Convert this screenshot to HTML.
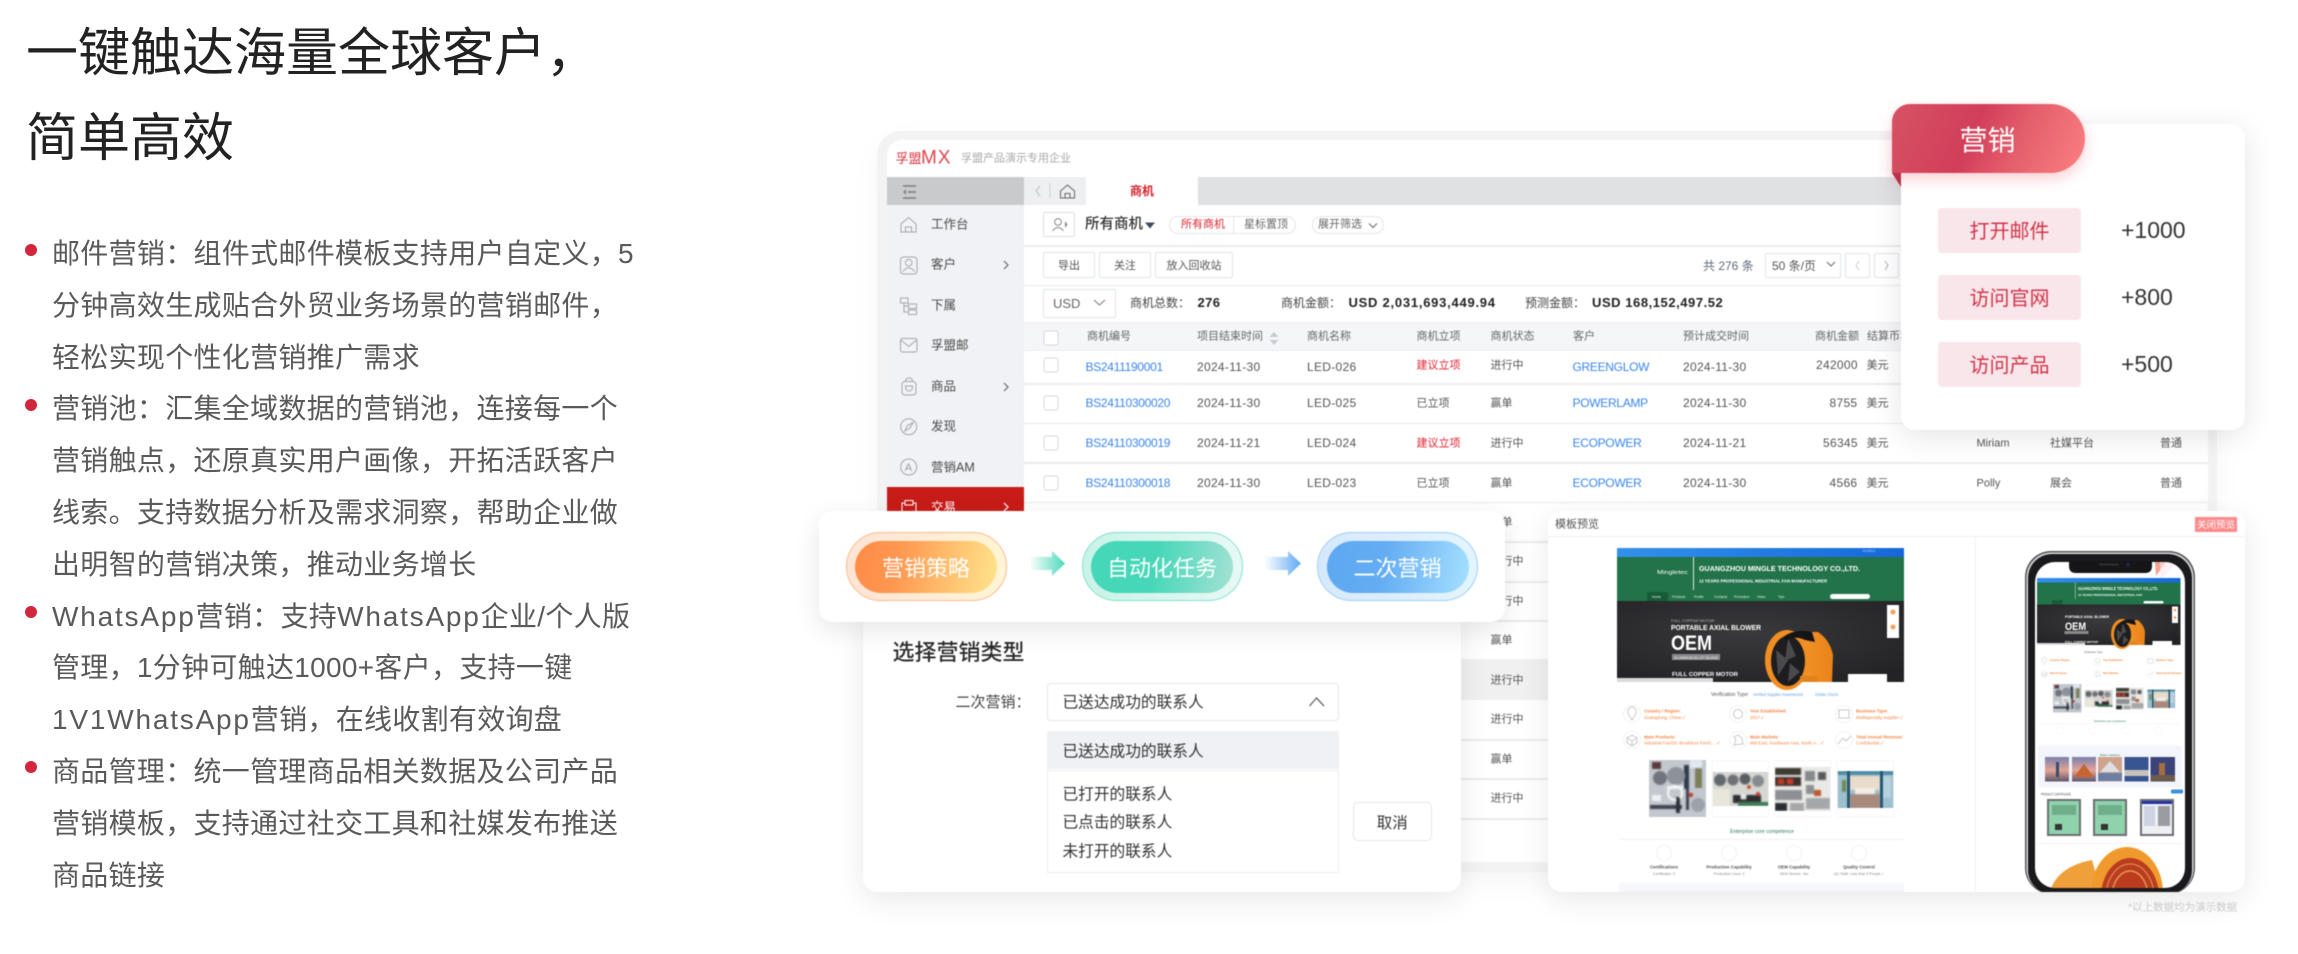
<!DOCTYPE html>
<html lang="zh"><head><meta charset="utf-8"><title>一键触达海量全球客户</title>
<style>
html,body{margin:0;padding:0;background:#fff}
body{position:relative;width:2298px;height:954px;overflow:hidden;font-family:"Liberation Sans","Noto Sans CJK SC",sans-serif;color:#333}
.t{position:absolute;white-space:nowrap;line-height:1.2;transform:translateY(-50%)}
.b{position:absolute;box-sizing:border-box}
.h1{font-size:52px;color:#222;left:26px}
.l{font-size:28px;color:#5a5a5a;left:52px;letter-spacing:.3px}
.w{letter-spacing:1.8px}
.dot{position:absolute;left:25px;width:12px;height:12px;border-radius:50%;background:#d2263c}
#mock{position:absolute;left:0;top:0;width:2298px;height:954px;filter:blur(.45px)}
.s{font-size:12.5px;color:#4a4a4a;left:931px}
.c{font-size:11px;color:#555;margin-top:1px}
.d{font-size:12px;letter-spacing:.3px;color:#555}
.bl{color:#3a86ee}.rd{color:#e1202e}
.btn{border:1px solid #dfe4ea;border-radius:2px;background:#fff;font-size:11px;color:#555;display:flex;align-items:center;justify-content:center}
.line{position:absolute;left:1024px;width:1184px;height:1.5px;background:#ebebec}
.card{position:absolute;background:#fff;box-shadow:0 8px 30px rgba(0,0,0,.09)}
.pill{position:absolute;top:532px;height:69px;width:161px;border-radius:35px;box-sizing:border-box;border:1.5px solid}
.in{position:absolute;top:541px;height:52px;width:142px;border-radius:26px;color:#fff;font-size:22px;display:flex;align-items:center;justify-content:center}
.mb{position:absolute;left:1938px;width:143px;height:45px;box-sizing:border-box;padding-bottom:3px;background:#f9e6ea;border-radius:4px;color:#d2334a;font-size:20px;display:flex;align-items:center;justify-content:center}
.mn{font-size:23px;color:#333;left:2121px}
svg{position:absolute;left:0;top:0}
</style></head><body>

<div class="t h1" style="top:54px">一键触达海量全球客户，</div>
<div class="t h1" style="top:139px">简单高效</div>

<i class="dot" style="top:244px"></i><i class="dot" style="top:399px"></i><i class="dot" style="top:606px"></i><i class="dot" style="top:761px"></i>
<div class="t l" style="top:253.5px">邮件营销：组件式邮件模板支持用户自定义，5</div>
<div class="t l" style="top:305.5px">分钟高效生成贴合外贸业务场景的营销邮件，</div>
<div class="t l" style="top:357.5px">轻松实现个性化营销推广需求</div>
<div class="t l" style="top:409px">营销池：汇集全域数据的营销池，连接每一个</div>
<div class="t l" style="top:461px">营销触点，还原真实用户画像，开拓活跃客户</div>
<div class="t l" style="top:512.5px">线索。支持数据分析及需求洞察，帮助企业做</div>
<div class="t l" style="top:564.5px">出明智的营销决策，推动业务增长</div>
<div class="t l" style="top:616.5px"><span class="w">WhatsApp</span>营销：支持<span class="w">WhatsApp</span>企业/个人版</div>
<div class="t l" style="top:668px">管理，1分钟可触达1000+客户，支持一键</div>
<div class="t l" style="top:719.5px"><span class="w">1V1WhatsApp</span>营销，在线收割有效询盘</div>
<div class="t l" style="top:771.5px">商品管理：统一管理商品相关数据及公司产品</div>
<div class="t l" style="top:823.5px">营销模板，支持通过社交工具和社媒发布推送</div>
<div class="t l" style="top:875.5px">商品链接</div>

<div id="mock">
<!-- main panel -->
<div class="b" style="left:877px;top:131px;width:1340px;height:741px;background:#fff;border:solid #f3f3f4;border-width:9px 9px 10px 10px;border-radius:24px;box-shadow:0 10px 30px rgba(0,0,0,.04)"></div>
<div class="b" style="left:887px;top:177px;width:137px;height:28px;background:#c9cacc"></div>
<div class="b" style="left:1024px;top:177px;width:1184px;height:28px;background:#e0e1e3"></div>
<div class="b" style="left:1024px;top:177px;width:62px;height:28px;background:#eeeff1"></div>
<div class="b" style="left:1086px;top:177px;width:112px;height:28px;background:#fff"></div>
<div class="b" style="left:887px;top:205px;width:137px;height:667px;background:#f1f2f5"></div>
<div class="b" style="left:887px;top:487px;width:137px;height:40px;background:#c71c18"></div>

<div class="t" style="left:895.5px;top:159px;font-size:13px;color:#d9303c">孚盟</div>
<div class="t" style="left:921px;top:159px;font-size:19px;color:#dc4650;letter-spacing:1px;font-weight:400">MX</div>
<div class="t" style="left:961px;top:159px;font-size:11px;color:#a8a8a8">孚盟产品演示专用企业</div>
<div class="t" style="left:1130px;top:191px;font-size:12px;color:#d7212c;font-weight:700">商机</div>

<div class="t s" style="top:225px">工作台</div>
<div class="t s" style="top:265px">客户</div>
<div class="t s" style="top:305.7px">下属</div>
<div class="t s" style="top:345.7px">孚盟邮</div>
<div class="t s" style="top:386.7px">商品</div>
<div class="t s" style="top:426.7px">发现</div>
<div class="t s" style="top:467.5px">营销AM</div>
<div class="t s" style="top:507.5px;color:#fff">交易</div>

<div class="b" style="left:1043px;top:212px;width:32px;height:25px;border:1px solid #dcdfe4;border-radius:2px"></div>
<div class="t" style="left:1085px;top:225px;font-size:14.5px;color:#333;font-weight:500">所有商机</div>
<div class="b" style="left:1169px;top:216px;width:127px;height:18px;border:1px solid #e4e6ea;border-radius:9px"></div>
<div class="b" style="left:1233px;top:216px;width:1px;height:18px;background:#e4e6ea"></div>
<div class="t" style="left:1181px;top:225px;font-size:11px;color:#dc2530">所有商机</div>
<div class="t" style="left:1244px;top:225px;font-size:11px;color:#666">星标置顶</div>
<div class="b" style="left:1312px;top:216px;width:72px;height:18px;border:1px solid #e4e6ea;border-radius:9px"></div>
<div class="t" style="left:1318px;top:225px;font-size:11px;color:#666">展开筛选</div>
<div class="line" style="top:245px"></div>

<div class="b btn" style="left:1043px;top:252px;width:52px;height:26px">导出</div>
<div class="b btn" style="left:1099px;top:252px;width:52px;height:26px">关注</div>
<div class="b btn" style="left:1155px;top:252px;width:78px;height:26px">放入回收站</div>
<div class="t" style="left:1703px;top:265.5px;font-size:12px;color:#5e6a78">共 276 条</div>
<div class="b btn" style="left:1765px;top:253px;width:76px;height:25px;justify-content:flex-start;padding-left:6px;font-size:12px">50 条/页</div>
<div class="b btn" style="left:1845px;top:253px;width:25px;height:25px"></div>
<div class="b btn" style="left:1874px;top:253px;width:25px;height:25px"></div>
<div class="line" style="top:284.5px"></div>

<div class="b btn" style="left:1043px;top:289px;width:73px;height:29px;justify-content:flex-start;padding-left:9px;font-size:13px;color:#666">USD</div>
<div class="t" style="left:1130px;top:303px;font-size:12px;color:#444">商机总数：</div>
<div class="t" style="left:1197.5px;top:303px;font-size:13px;font-weight:700;color:#222;letter-spacing:.4px">276</div>
<div class="t" style="left:1281px;top:303px;font-size:12px;color:#444">商机金额：</div>
<div class="t" style="left:1348.5px;top:303px;font-size:13px;font-weight:700;color:#222;letter-spacing:.75px">USD 2,031,693,449.94</div>
<div class="t" style="left:1525px;top:303px;font-size:12px;color:#444">预测金额：</div>
<div class="t" style="left:1592px;top:303px;font-size:13px;font-weight:700;color:#222;letter-spacing:.55px">USD 168,152,497.52</div>

<div class="b" style="left:1024px;top:322px;width:1184px;height:29px;background:#f5f6f8;border-top:1px solid #eee;border-bottom:1px solid #eee"></div>
<div class="t c" style="left:1087px;top:336px;color:#666">商机编号</div>
<div class="t c" style="left:1197px;top:336px;color:#666">项目结束时间</div>
<div class="t c" style="left:1307px;top:336px;color:#666">商机名称</div>
<div class="t c" style="left:1416.5px;top:336px;color:#666">商机立项</div>
<div class="t c" style="left:1490.5px;top:336px;color:#666">商机状态</div>
<div class="t c" style="left:1573px;top:336px;color:#666">客户</div>
<div class="t c" style="left:1683px;top:336px;color:#666">预计成交时间</div>
<div class="t c" style="left:1815px;top:336px;color:#666">商机金额</div>
<div class="t c" style="left:1867px;top:336px;color:#666">结算币种</div>

<div class="line" style="top:383px"></div><div class="line" style="top:422.5px"></div><div class="line" style="top:462px"></div><div class="line" style="top:501.5px"></div>
<div class="line" style="top:541px"></div><div class="line" style="top:581px"></div><div class="line" style="top:620px"></div>
<div class="b" style="left:1024px;top:659px;width:1184px;height:41px;background:#f0f0f1"></div>
<div class="line" style="top:739px"></div><div class="line" style="top:778px"></div><div class="line" style="top:818px"></div>

<!-- row 1 -->
<div class="t d bl" style="left:1085.5px;top:366.5px;letter-spacing:-.3px">BS2411190001</div>
<div class="t d" style="left:1197px;top:366.5px">2024-11-30</div>
<div class="t d" style="left:1307px;top:366.5px">LED-026</div>
<div class="t c rd" style="left:1416.5px;top:364.5px">建议立项</div>
<div class="t c" style="left:1490.5px;top:364.5px">进行中</div>
<div class="t d bl" style="left:1572.5px;top:366.5px;letter-spacing:-.3px">GREENGLOW</div>
<div class="t d" style="left:1683px;top:366.5px">2024-11-30</div>
<div class="t d" style="left:1816px;top:364.5px">242000</div>
<div class="t c" style="left:1866.5px;top:364.5px">美元</div>
<!-- row 2 -->
<div class="t d bl" style="left:1085.5px;top:403px;letter-spacing:-.3px">BS24110300020</div>
<div class="t d" style="left:1197px;top:403px">2024-11-30</div>
<div class="t d" style="left:1307px;top:403px">LED-025</div>
<div class="t c" style="left:1416.5px;top:403px">已立项</div>
<div class="t c" style="left:1490.5px;top:403px">赢单</div>
<div class="t d bl" style="left:1572.5px;top:403px;letter-spacing:-.3px">POWERLAMP</div>
<div class="t d" style="left:1683px;top:403px">2024-11-30</div>
<div class="t d" style="left:1829.5px;top:403px">8755</div>
<div class="t c" style="left:1866.5px;top:403px">美元</div>
<!-- row 3 -->
<div class="t d bl" style="left:1085.5px;top:443px;letter-spacing:-.3px">BS24110300019</div>
<div class="t d" style="left:1197px;top:443px">2024-11-21</div>
<div class="t d" style="left:1307px;top:443px">LED-024</div>
<div class="t c rd" style="left:1416.5px;top:443px">建议立项</div>
<div class="t c" style="left:1490.5px;top:443px">进行中</div>
<div class="t d bl" style="left:1572.5px;top:443px;letter-spacing:-.3px">ECOPOWER</div>
<div class="t d" style="left:1683px;top:443px">2024-11-21</div>
<div class="t d" style="left:1823px;top:443px">56345</div>
<div class="t c" style="left:1866.5px;top:443px">美元</div>
<div class="t c" style="left:1976.5px;top:443px">Miriam</div>
<div class="t c" style="left:2050px;top:443px">社媒平台</div>
<div class="t c" style="left:2160px;top:443px">普通</div>
<!-- row 4 -->
<div class="t d bl" style="left:1085.5px;top:482.5px;letter-spacing:-.3px">BS24110300018</div>
<div class="t d" style="left:1197px;top:482.5px">2024-11-30</div>
<div class="t d" style="left:1307px;top:482.5px">LED-023</div>
<div class="t c" style="left:1416.5px;top:482.5px">已立项</div>
<div class="t c" style="left:1490.5px;top:482.5px">赢单</div>
<div class="t d bl" style="left:1572.5px;top:482.5px;letter-spacing:-.3px">ECOPOWER</div>
<div class="t d" style="left:1683px;top:482.5px">2024-11-30</div>
<div class="t d" style="left:1829.5px;top:482.5px">4566</div>
<div class="t c" style="left:1866.5px;top:482.5px">美元</div>
<div class="t c" style="left:1976.5px;top:482.5px">Polly</div>
<div class="t c" style="left:2050px;top:482.5px">展会</div>
<div class="t c" style="left:2160px;top:482.5px">普通</div>
<!-- status col -->
<div class="t c" style="left:1490.5px;top:522px">赢单</div>
<div class="t c" style="left:1490.5px;top:561px">进行中</div>
<div class="t c" style="left:1490.5px;top:600.5px">进行中</div>
<div class="t c" style="left:1490.5px;top:640px">赢单</div>
<div class="t c" style="left:1490.5px;top:680px">进行中</div>
<div class="t c" style="left:1490.5px;top:719px">进行中</div>
<div class="t c" style="left:1490.5px;top:759px">赢单</div>
<div class="t c" style="left:1490.5px;top:798px">进行中</div>

<!-- panel icons -->
<svg width="2298" height="954" viewBox="0 0 2298 954" fill="none" stroke="#a3a6ab" stroke-width="1" style="z-index:1">
<path d="M903 186H916M908 192H916M903 198H916" stroke="#7d7f82" stroke-width="1.4"/><path d="M906 189.5L903 192L906 194.5Z" fill="#7d7f82" stroke="none"/>
<path d="M901 224L908.5 217.5L916 224V232H901ZM905.5 232V227H911.5V232"/>
<rect x="900.5" y="257" width="16.5" height="17" rx="3"/><circle cx="908.7" cy="262.7" r="3.3"/><path d="M903 271.5Q908.7 264 914.5 271.5"/>
<rect x="900.5" y="298" width="7.5" height="5"/><rect x="908.5" y="304" width="8" height="4.5"/><rect x="908.5" y="310" width="8" height="4.5"/><path d="M904 303V312H908.5M904 306H908.5"/>
<rect x="900.5" y="338.5" width="16.5" height="13.5" rx="2"/><path d="M901 340L908.7 346.5L916.5 340"/>
<rect x="902" y="381.5" width="14" height="13.5" rx="3"/><path d="M905.5 381.5Q905.5 378 909 378Q912.5 378 912.5 381.5"/><path d="M905.5 386H912.5Q912.5 391 909 391Q905.5 391 905.5 386Z"/>
<circle cx="908.7" cy="426.7" r="8"/><path d="M913 422.5L910 428L904.8 431L907.5 425.5Z"/>
<circle cx="908.7" cy="467" r="8"/><text x="904.7" y="471" font-size="11" fill="#999" stroke="none" font-family="Liberation Sans">A</text>
<path d="M905 503H902V513H916V503H913M905 500.5H913V505H905Z" stroke="#fff"/>
<path d="M1004 261L1008 265L1004 269M1004 383L1008 387L1004 391" stroke="#666" stroke-width="1.2"/>
<path d="M1004 503L1008 507L1004 511" stroke="#fff" stroke-width="1.2"/>
<path d="M1040 186L1036 191L1040 196" stroke="#bbb"/><path d="M1050 183V198" stroke="#d4d4d6"/>
<path d="M1060.5 191L1067.5 185L1074.5 191V198H1060.5ZM1065 198V193.5H1070V198" stroke="#666"/>
<circle cx="1058" cy="222" r="3.4" stroke="#888"/><path d="M1052.5 231Q1058 224 1063.5 231" stroke="#888"/><path d="M1065 221L1067.5 224.5L1065 228Z" fill="#888" stroke="none"/>
<path d="M1145 222.5H1155L1150 228.5Z" fill="#3f4d63" stroke="none"/>
<path d="M1369 223.5L1373 227.5L1377 223.5" stroke="#666"/>
<path d="M1094 300L1099.5 305L1105 300" stroke="#777"/>
<path d="M1827 262L1831 266L1835 262" stroke="#667"/>
<path d="M1859 261L1856 265.5L1859 270" stroke="#ccd"/><path d="M1885 261L1888 265.5L1885 270" stroke="#aab"/>
<path d="M1274 332L1278.5 337H1269.5ZM1274 345L1278.5 340H1269.5Z" fill="#c8ccd2" stroke="none"/>
<g stroke="#d5d8dc" fill="#fff"><rect x="1044" y="331" width="14" height="14" rx="2"/><rect x="1044" y="358" width="14" height="14" rx="2"/><rect x="1044" y="396" width="14" height="14" rx="2"/><rect x="1044" y="436" width="14" height="14" rx="2"/><rect x="1044" y="476" width="14" height="14" rx="2"/></g>
</svg>

<!-- template card -->
<div class="card" style="left:1547.5px;top:511px;width:697.5px;height:381px;border-radius:14px;z-index:2"></div>
<div class="b" style="left:1547.5px;top:536px;width:697.5px;height:1px;background:#efefef;z-index:2"></div>
<div class="b" style="left:1975px;top:536px;width:1px;height:356px;background:#efefef;z-index:2"></div>
<div class="t" style="left:1555px;top:524.5px;font-size:11px;color:#555;z-index:2">模板预览</div>
<div class="b" style="left:2195px;top:516.5px;width:42px;height:15px;background:#fb8a8a;color:#fff;font-size:9.5px;display:flex;align-items:center;justify-content:center;z-index:2">关闭预览</div>

<svg width="2298" height="954" viewBox="0 0 2298 954" style="z-index:2" font-family="Liberation Sans, Noto Sans CJK SC, sans-serif">
<defs>
<linearGradient id="bb" x1="0" x2="1"><stop offset="0" stop-color="#3391ec"/><stop offset="1" stop-color="#1668d8"/></linearGradient>
<radialGradient id="dk" cx=".45" cy=".4" r=".7"><stop offset="0" stop-color="#3a3a3c"/><stop offset="1" stop-color="#232325"/></radialGradient>
<linearGradient id="sun" x1="0" y1="0" x2="0" y2="1"><stop offset="0" stop-color="#7b7fae"/><stop offset=".55" stop-color="#e3a596"/><stop offset="1" stop-color="#5c566d"/></linearGradient>
<linearGradient id="drum" x1="0" x2="1"><stop offset="0" stop-color="#f59a2e"/><stop offset="1" stop-color="#e9831a"/></linearGradient>
<filter id="soft" x="-5%" y="-5%" width="110%" height="110%"><feGaussianBlur stdDeviation=".9"/></filter>
<clipPath id="cardclip"><rect x="1547" y="511" width="698" height="381"/></clipPath>
<clipPath id="scr"><rect x="2035" y="562" width="150" height="326" rx="20"/></clipPath>
<clipPath id="ph1"><rect x="1649" y="760" width="57" height="57"/></clipPath>
<clipPath id="ph2"><rect x="1712" y="772" width="57" height="34"/></clipPath>
<clipPath id="ph3"><rect x="1774" y="767" width="57" height="44"/></clipPath>
<clipPath id="ph4"><rect x="1837" y="771" width="57" height="37"/></clipPath>
<g id="site">
<rect x="1617" y="548" width="287" height="9" fill="url(#bb)"/>
<rect x="1617" y="557" width="287" height="44" fill="#22734a"/>
<rect x="1693" y="557" width="1" height="33" fill="#d8e8df"/>
<rect x="1647" y="592" width="21" height="9" fill="#175c38"/>
<rect x="1830" y="594" width="40" height="5" rx="2.5" fill="#fff"/>
<rect x="1617" y="601" width="287" height="81" fill="url(#dk)"/>
<rect x="1672" y="654" width="48" height="6" fill="#8a8a8c"/>
<path d="M1785 632 L1818 632 Q1830 640 1833 655 L1832 682 L1785 682Z" fill="url(#drum)"/>
<ellipse cx="1787" cy="660" rx="22" ry="30" fill="#f08e22"/>
<ellipse cx="1788" cy="661" rx="17" ry="25" fill="#1d1d1f"/>
<path d="M1788 638L1796 656L1785 661ZM1776 650L1788 660L1778 676ZM1790 663L1800 672L1788 682Z" fill="#4a4a4c"/>
<path d="M1783 637Q1796 628 1812 632L1815 642L1805 640Q1795 635 1786 641Z" fill="#151517"/>
<rect x="1800" y="676" width="18" height="6" fill="#e2821c"/>
<rect x="1887" y="605" width="12" height="33" fill="#fff"/><circle cx="1893" cy="612" r="2.5" fill="#f5a05e"/><circle cx="1893" cy="627" r="2.5" fill="#f5a05e"/>
<rect x="1848" y="674" width="39" height="8" fill="#fff"/>
<rect x="1617" y="678" width="96" height="4" fill="#d9dadd"/>
<g fill="#fff" stroke="#eee" stroke-width=".8"><circle cx="1632" cy="714" r="8.5"/><circle cx="1738" cy="714" r="8.5"/><circle cx="1844" cy="714" r="8.5"/><circle cx="1632" cy="740" r="8.5"/><circle cx="1738" cy="740" r="8.5"/><circle cx="1844" cy="740" r="8.5"/></g>
<g fill="none" stroke="#c2c4c8" stroke-width=".9"><path d="M1632 720Q1627 713 1628 711A4 4 0 1 1 1636 711Q1637 713 1632 720Z"/><circle cx="1738" cy="714" r="4.5"/><rect x="1839" y="710" width="10" height="8"/><path d="M1632 735L1637 738V743L1632 746L1627 743V738ZM1627 738L1632 741L1637 738M1632 741V746"/><path d="M1734 745L1736 740L1734 737L1738 735L1742 738L1743 744Z"/><path d="M1838 744L1843 738L1846 741L1851 736"/></g>
<!-- photos -->
<g clip-path="url(#ph1)"><rect x="1649" y="760" width="57" height="57" fill="#c3c8ce"/>
<g filter="url(#soft)"><rect x="1652" y="762" width="9" height="7" fill="#5a3a3c"/><rect x="1690" y="760" width="12" height="8" fill="#dfe9f0"/><rect x="1684" y="765" width="5" height="24" fill="#2f3a4c"/><rect x="1695" y="768" width="7" height="20" fill="#7a7f58"/><circle cx="1676" cy="776" r="9" fill="#8d929a"/><circle cx="1660" cy="778" r="7" fill="#6f747d"/><rect x="1667" y="786" width="16" height="3" fill="#f3f5f7"/><circle cx="1675" cy="793" r="7" fill="none" stroke="#f2f4f6" stroke-width="2.4"/><rect x="1652" y="795" width="9" height="6" fill="#eef0f2"/><rect x="1650" y="805" width="32" height="4" fill="#3e4350"/><rect x="1676" y="797" width="4" height="16" fill="#2b2f3a"/><rect x="1686" y="788" width="3" height="22" fill="#3a3f4c"/><circle cx="1691" cy="795" r="2.2" fill="#c93a28"/><circle cx="1698" cy="805" r="7" fill="#9da1a8"/></g></g>
<g clip-path="url(#ph2)"><rect x="1712" y="772" width="57" height="34" fill="#d6d6d2"/>
<g filter="url(#soft)"><circle cx="1720" cy="780" r="6" fill="#64686d"/><circle cx="1733" cy="780" r="5.5" fill="#6e7276"/><circle cx="1745" cy="779" r="5.5" fill="#5a5e64"/><circle cx="1758" cy="781" r="6" fill="#888b8f"/><rect x="1712" y="789" width="18" height="17" fill="#e9e7dc"/><rect x="1733" y="795" width="28" height="8" fill="#2d2f30"/><rect x="1738" y="802" width="31" height="4" fill="#3f7c55"/><circle cx="1749" cy="787" r="2" fill="#c95028"/><circle cx="1758" cy="794" r="2" fill="#c23a26"/><rect x="1741" y="794" width="5" height="5" fill="#e8e8e6"/></g></g>
<g clip-path="url(#ph3)"><rect x="1774" y="767" width="57" height="44" fill="#e9e9e6"/>
<g filter="url(#soft)"><rect x="1775" y="768" width="26" height="7" fill="#3d3a33"/><rect x="1775" y="777" width="26" height="9" fill="#3c2e2c"/><rect x="1778" y="779" width="6" height="5" fill="#bb3a28"/><rect x="1787" y="779" width="6" height="5" fill="#c23d2c"/><rect x="1775" y="790" width="27" height="10" fill="#8d8f94"/><rect x="1775" y="803" width="12" height="8" fill="#2c2d30"/><rect x="1790" y="803" width="14" height="8" fill="#a6a7a8"/><rect x="1805" y="771" width="10" height="10" fill="#87898d"/><rect x="1818" y="772" width="8" height="8" fill="#585a5e"/><rect x="1806" y="785" width="8" height="9" fill="#8d8f92"/><rect x="1814" y="790" width="7" height="6" fill="#bb5a2c"/><rect x="1806" y="798" width="24" height="11" fill="#a5a7aa"/></g></g>
<g clip-path="url(#ph4)"><rect x="1837" y="771" width="57" height="37" fill="#9dbfd2"/>
<g filter="url(#soft)"><rect x="1837" y="771" width="57" height="4" fill="#4e8ba3"/><rect x="1850" y="776" width="30" height="14" fill="#e9dccb"/><rect x="1855" y="788" width="20" height="6" fill="#f2eee8"/><rect x="1850" y="794" width="30" height="14" fill="#a88a7c"/><rect x="1842" y="780" width="4" height="12" fill="#6a8a4c"/><rect x="1883" y="776" width="8" height="22" fill="#b7d1dd"/></g>
<rect x="1847" y="771" width="3" height="37" fill="#275a70"/><rect x="1880" y="771" width="3" height="37" fill="#275a70"/></g>
<rect x="1712.5" y="760.5" width="56" height="56" fill="none" stroke="#f4f5f6" stroke-width=".8"/><rect x="1774.5" y="760.5" width="56" height="56" fill="none" stroke="#f4f5f6" stroke-width=".8"/><rect x="1837.5" y="760.5" width="56" height="56" fill="none" stroke="#f4f5f6" stroke-width=".8"/>
<rect x="1619" y="839" width="285" height=".8" fill="#eee"/>
<g fill="#fff" stroke="#eee" stroke-width=".8"><circle cx="1664" cy="853" r="7.5"/><circle cx="1729" cy="853" r="7.5"/><circle cx="1794" cy="853" r="7.5"/><circle cx="1859" cy="853" r="7.5"/></g>
<rect x="1619" y="883" width="285" height="9" fill="#f5f7fb"/>
</g>
</defs>

<g clip-path="url(#cardclip)" style="filter:blur(.3px)">
<use href="#site"/>
<g fill="#fff">
<text x="1699" y="571" font-size="7.5" font-weight="700" textLength="161" lengthAdjust="spacingAndGlyphs">GUANGZHOU MINGLE TECHNOLOGY CO.,LTD.</text>
<text x="1699" y="582.5" font-size="4.5" font-weight="700" textLength="128" lengthAdjust="spacingAndGlyphs">12 YEARS PROFESSIONAL INDUSTRIAL FAN MANUFACTURER</text>
<text x="1657" y="574" font-size="5" textLength="31" lengthAdjust="spacingAndGlyphs">Mingletec</text>
<text x="1671" y="622" font-size="4" fill="#bbb">FULL COPPER MOTOR</text>
<text x="1671" y="630" font-size="7" font-weight="700" textLength="90" lengthAdjust="spacingAndGlyphs">PORTABLE AXIAL BLOWER</text>
<text x="1671" y="650" font-size="21" font-weight="700" textLength="41" lengthAdjust="spacingAndGlyphs">OEM</text>
<text x="1674" y="659" font-size="4" fill="#eee" textLength="44" lengthAdjust="spacingAndGlyphs">ALUMINUM ALLOY BLADE</text>
<text x="1672" y="676" font-size="5.5" font-weight="700" textLength="66" lengthAdjust="spacingAndGlyphs">FULL COPPER MOTOR</text>
</g>
<g font-size="3.4" fill="#dfeee6"><text x="1652" y="598">Home</text><text x="1672" y="598">Products</text><text x="1694" y="598">Profile</text><text x="1714" y="598">Contacts</text><text x="1734" y="598">Promotion</text><text x="1757" y="598">Video</text><text x="1778" y="598">Tips</text></g>
<text x="1862" y="552" font-size="4" fill="#9cc8f5">Verified</text>
<text x="1711" y="696" font-size="5.2" fill="#555" textLength="38" lengthAdjust="spacingAndGlyphs">Verification Type:</text>
<text x="1753" y="696" font-size="4.6" fill="#5f9fe8" textLength="50" lengthAdjust="spacingAndGlyphs">Verified Supplier Assessment</text>
<text x="1815" y="696" font-size="4.6" fill="#5f9fe8" textLength="23" lengthAdjust="spacingAndGlyphs">Onsite Check</text>
<g font-size="4.4" fill="#f5843e">
<text x="1644" y="712.5" font-weight="700">Country / Region:</text><text x="1644" y="718.8">Guangdong, China ✓</text>
<text x="1750" y="712.5" font-weight="700">Year Established:</text><text x="1750" y="718.8">2017 ✓</text>
<text x="1856" y="712.5" font-weight="700">Business Type:</text><text x="1856" y="718.8">Multispecialty supplier ✓</text>
<text x="1644" y="738.5" font-weight="700">Main Products:</text><text x="1644" y="744.5">Industrial Fan/DC Brushless Fan/C... ✓</text>
<text x="1750" y="738.5" font-weight="700">Main Markets:</text><text x="1750" y="744.5">Mid East, Southeast Asia, North A... ✓</text>
<text x="1856" y="738.5" font-weight="700">Total Annual Revenue:</text><text x="1856" y="744.5">Confidential ✓</text>
</g>
<text x="1730" y="833" font-size="5.4" fill="#2f7a5b" textLength="64" lengthAdjust="spacingAndGlyphs">Enterprise core competence</text>
<g font-size="4.4" fill="#555" font-weight="700" text-anchor="middle"><text x="1664" y="868.5">Certifications</text><text x="1729" y="868.5">Production Capability</text><text x="1794" y="868.5">OEM Capability</text><text x="1859" y="868.5">Quality Control</text></g>
<g font-size="3.6" fill="#888" text-anchor="middle"><text x="1664" y="875">Certificates: 9</text><text x="1729" y="875">Production Lines: 3</text><text x="1794" y="875">OEM Service: Yes</text><text x="1859" y="875">QC Staff: Less than 5 People ✓</text></g>

<!-- phone -->
<rect x="2025" y="551" width="170" height="343" rx="26" fill="#56575a"/>
<rect x="2026.5" y="552.5" width="167" height="341" rx="25" fill="#d9dadc"/>
<rect x="2028" y="554" width="164" height="340" rx="24" fill="#1a1a1c"/>
<rect x="2035" y="562" width="150" height="326" rx="20" fill="#fff"/>
<g clip-path="url(#scr)">
<path d="M2155 562H2166L2156 576Z" fill="#f5a28a"/>
<path d="M2160 562H2178L2160 580Z" fill="#fbe7ee" opacity=".6"/>
<g transform="translate(2037 578) scale(.5) translate(-1617 -548)"><use href="#site"/></g>
<g fill="#fff">
<text x="2078" y="590" font-size="4.4" font-weight="700" textLength="80" lengthAdjust="spacingAndGlyphs">GUANGZHOU MINGLE TECHNOLOGY CO.,LTD.</text>
<text x="2078" y="596" font-size="2.6" font-weight="700" textLength="64" lengthAdjust="spacingAndGlyphs">12 YEARS PROFESSIONAL INDUSTRIAL FAN</text>
<text x="2065" y="618" font-size="4" font-weight="700" textLength="44" lengthAdjust="spacingAndGlyphs">PORTABLE AXIAL BLOWER</text>
<text x="2065" y="630" font-size="11" font-weight="700" textLength="21" lengthAdjust="spacingAndGlyphs">OEM</text>
<text x="2065" y="643" font-size="3" font-weight="700" textLength="33" lengthAdjust="spacingAndGlyphs">FULL COPPER MOTOR</text>
</g>
<text x="2084" y="653" font-size="3" fill="#666" textLength="19" lengthAdjust="spacingAndGlyphs">Verification Type:</text>
<g font-size="2.4" fill="#f5843e" font-weight="700"><text x="2050" y="661">Country / Region:</text><text x="2103" y="661">Year Established:</text><text x="2156" y="661">Business Type:</text><text x="2050" y="674">Main Products:</text><text x="2103" y="674">Main Markets:</text><text x="2156" y="674">Total Annual Revenue:</text></g>
<text x="2094" y="722" font-size="3" fill="#2f7a5b" textLength="32" lengthAdjust="spacingAndGlyphs">Enterprise core competence</text>
<rect x="2038" y="746.5" width="144" height="41" fill="#f3f5fc"/>
<text x="2100" y="756" font-size="3" fill="#2f7a5b" textLength="20" lengthAdjust="spacingAndGlyphs">Main markets</text>
<rect x="2045" y="757" width="24" height="24.5" fill="url(#sun)"/><rect x="2056" y="762" width="3" height="15" fill="#3a4a6d"/>
<rect x="2072" y="757" width="24" height="24.5" fill="url(#sun)"/><path d="M2074 777L2084 764L2094 777Z" fill="#c5652f"/>
<rect x="2098" y="757" width="24" height="24.5" fill="#cfa28a"/><path d="M2100 772L2110 761L2120 772Z" fill="#dcdfe4"/><rect x="2098" y="773" width="24" height="8" fill="#6b7fa5"/>
<rect x="2124.5" y="757" width="24" height="24.5" fill="#39558f"/><rect x="2124.5" y="770" width="24" height="6" fill="#c7c3bb"/>
<rect x="2150.5" y="757" width="24.5" height="24.5" fill="#3b4378"/><rect x="2159" y="763" width="6" height="15" fill="#a56e3f"/><rect x="2150.5" y="775" width="24.5" height="6" fill="#6d5a4b"/>
<text x="2041" y="795.5" font-size="3.4" fill="#444" textLength="30" lengthAdjust="spacingAndGlyphs">PRODUCT CERTIFICATE</text>
<rect x="2171" y="789.5" width="12" height="4" rx="1" fill="#3d8fe0"/>
<rect x="2047" y="799" width="34" height="37" fill="#6d6e72"/><rect x="2049" y="801" width="30" height="33" fill="#8fd3ad"/><rect x="2052" y="805" width="24" height="10" fill="#6fae8c"/><rect x="2055" y="824" width="7" height="6" fill="#333"/>
<rect x="2093" y="799" width="34" height="37" fill="#6d6e72"/><rect x="2095" y="801" width="30" height="33" fill="#8fd3ad"/><rect x="2098" y="805" width="24" height="10" fill="#6fae8c"/><rect x="2101" y="824" width="7" height="6" fill="#333"/>
<rect x="2140" y="799" width="34" height="37" fill="#6d6e72"/><rect x="2142" y="801" width="30" height="33" fill="#eef0f4"/><rect x="2142" y="801" width="30" height="3" fill="#2233a8"/><rect x="2144" y="806" width="11" height="20" fill="#cdd3e0"/><rect x="2158" y="806" width="12" height="20" fill="#9a9ca2"/>
<rect x="2038" y="843" width="144" height=".8" fill="#eee"/>
<path d="M2051 888Q2060 866 2092 860L2100 888Z" fill="#f0a03a"/>
<ellipse cx="2127" cy="893" rx="36" ry="46" fill="#f09a2e"/>
<ellipse cx="2130" cy="897" rx="29" ry="39" fill="#bb3c1f"/>
<ellipse cx="2130" cy="897" rx="18" ry="26" fill="none" stroke="#e49a52" stroke-width="1.5"/>
<ellipse cx="2130" cy="897" rx="24" ry="33" fill="none" stroke="#e49a52" stroke-width="1"/>
</g>
<path d="M2069 561H2152V566Q2152 573 2145 573H2076Q2069 573 2069 566Z" fill="#161618"/>
<rect x="2099" y="563.5" width="20" height="2" rx="1" fill="#2e2e30"/><circle cx="2128" cy="564.5" r="1.7" fill="#1c2c52"/>
</g>
</svg>
<div class="t" style="left:2128px;top:907.5px;font-size:10.5px;color:#c9c9c9;z-index:2">*以上数据均为演示数据</div>

<!-- dialog -->
<div class="card" style="left:863px;top:600px;width:598px;height:292px;border-radius:14px;z-index:3"></div>
<div class="t" style="left:892.5px;top:653px;font-size:22px;font-weight:500;color:#2c2c2c;z-index:3">选择营销类型</div>
<div class="t" style="left:955.5px;top:703px;font-size:15px;color:#444;z-index:3">二次营销：</div>
<div class="b" style="left:1046.5px;top:683px;width:292.5px;height:38px;border:1px solid #e6e7ea;border-radius:4px;z-index:3"></div>
<div class="t" style="left:1062.5px;top:704px;font-size:15.7px;color:#333;z-index:3">已送达成功的联系人</div>
<div class="b" style="left:1046.5px;top:730.5px;width:292.5px;height:38.5px;background:#f0f1f5;z-index:3"></div>
<div class="t" style="left:1062.5px;top:752.5px;font-size:15.7px;color:#333;z-index:3">已送达成功的联系人</div>
<div class="b" style="left:1046.5px;top:770px;width:292.5px;height:103px;border:1px solid #ecedef;z-index:3"></div>
<div class="t" style="left:1062.5px;top:795.5px;font-size:15.7px;color:#333;z-index:3">已打开的联系人</div>
<div class="t" style="left:1062.5px;top:824px;font-size:15.7px;color:#333;z-index:3">已点击的联系人</div>
<div class="t" style="left:1062.5px;top:853px;font-size:15.7px;color:#333;z-index:3">未打开的联系人</div>
<div class="b" style="left:1352.5px;top:802px;width:79.5px;height:39px;border:1px solid #e6e7ea;border-radius:5px;font-size:15.5px;color:#333;display:flex;align-items:center;justify-content:center;z-index:3">取消</div>
<svg width="2298" height="954" viewBox="0 0 2298 954" fill="none" style="z-index:3"><path d="M1309.5 706L1316.5 698L1324 706" stroke="#666" stroke-width="1.3"/></svg>

<!-- strategy card -->
<div class="card" style="left:819px;top:511px;width:686px;height:111px;border-radius:14px;z-index:4;box-shadow:0 8px 26px rgba(0,0,0,.10)"></div>
<div class="pill" style="left:846px;background:linear-gradient(90deg,#ffe4d4,#fff5d6);border-color:#fdb98a;z-index:4"></div>
<div class="in" style="left:855px;background:linear-gradient(100deg,#ff8b48 0%,#ff9750 30%,#ffc270 68%,#ffe48c 100%);z-index:4">营销策略</div>
<div class="pill" style="left:1082px;background:linear-gradient(90deg,#c9f3e8,#e8f9f4);border-color:#7fe2cb;z-index:4"></div>
<div class="in" style="left:1091px;background:linear-gradient(100deg,#45d8b8 0%,#47d7b8 45%,#a5e2d4 100%);z-index:4">自动化任务</div>
<div class="pill" style="left:1317px;background:linear-gradient(90deg,#d6e8fc,#e3f5ff);border-color:#9ccef8;z-index:4"></div>
<div class="in" style="left:1326.5px;background:linear-gradient(100deg,#5ea8f2 0%,#64adf3 40%,#a6e0ff 100%);z-index:4">二次营销</div>
<svg width="2298" height="954" viewBox="0 0 2298 954" style="z-index:4">
<defs><linearGradient id="ga" x1="0" x2="1"><stop offset="0" stop-color="#fff"/><stop offset="1" stop-color="#4cd9ba"/></linearGradient><linearGradient id="gb" x1="0" x2="1"><stop offset="0" stop-color="#fff"/><stop offset="1" stop-color="#5fa9f2"/></linearGradient></defs>
<path d="M1029.5 556.5L1052 557V551L1065 563.5L1052 576V570H1029.5Z" fill="url(#ga)"/>
<path d="M1264.5 556.5L1288 557V551L1301 563.5L1288 576V570H1264.5Z" fill="url(#gb)"/>
</svg>

<!-- marketing card -->
<div class="card" style="left:1901px;top:124px;width:344px;height:306px;border-radius:14px;z-index:5;box-shadow:0 6px 30px rgba(0,0,0,.11)"></div>
<svg width="2298" height="954" viewBox="0 0 2298 954" style="z-index:5"><path d="M1892 173H1901V187Z" fill="#b42a43"/></svg>
<div class="b" style="left:1892px;top:104px;width:193px;height:69px;border-radius:18px 35px 35px 0;background:linear-gradient(115deg,#d65363 0%,#d23e5a 42%,#e45f6c 65%,#fb8082 100%);box-shadow:0 6px 14px rgba(235,90,105,.28);z-index:5;color:#fff;font-size:28px;display:flex;align-items:center;justify-content:center;padding-right:2px">营销</div>
<div class="mb" style="top:208px;z-index:5">打开邮件</div>
<div class="mb" style="top:275px;z-index:5">访问官网</div>
<div class="mb" style="top:342px;z-index:5">访问产品</div>
<div class="t mn" style="top:230.5px;z-index:5">+1000</div>
<div class="t mn" style="top:297.5px;z-index:5">+800</div>
<div class="t mn" style="top:364.5px;z-index:5">+500</div>
</div>
</body></html>
